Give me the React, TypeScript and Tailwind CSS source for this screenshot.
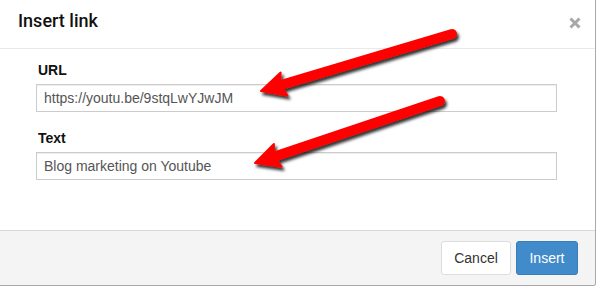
import React from "react";

type P = [number, number];

function Arrow({ tail, tip }: { tail: P; tip: P }) {
  const dx = tip[0] - tail[0];
  const dy = tip[1] - tail[1];
  const len = Math.hypot(dx, dy);
  const ux = dx / len;
  const uy = dy / len;
  const nx = -uy;
  const ny = ux;
  const L = 24;
  const W = 12;
  const back = 4;
  const bx = tip[0] - ux * L;
  const by = tip[1] - uy * L;
  const nb: P = [tip[0] - ux * (L - back), tip[1] - uy * (L - back)];
  const pts = [
    tip,
    [bx + nx * W, by + ny * W],
    nb,
    [bx - nx * W, by - ny * W],
  ]
    .map((p) => `${p[0].toFixed(1)},${p[1].toFixed(1)}`)
    .join(" ");
  return (
    <g filter="url(#sh)">
      <line
        x1={tail[0]}
        y1={tail[1]}
        x2={nb[0]}
        y2={nb[1]}
        stroke="#ff0000"
        strokeWidth={10}
        strokeLinecap="round"
      />
      <polygon points={pts} fill="#ff0000" stroke="#ff0000" strokeWidth={2} strokeLinejoin="round" />
    </g>
  );
}

export default function App() {
  return (
    <div
      className="relative w-[597px] h-[286px] bg-white overflow-hidden"
      style={{ fontFamily: "'Liberation Sans', Arial, sans-serif" }}
    >
      <div className="w-[596px] h-[286px] bg-white border-r border-b border-[#a9a9a9] rounded-br-[3px] flex flex-col">
        {/* header */}
        <div className="h-[49px] border-b border-[#e9e9e9] flex items-start justify-between pl-[18px] pr-[14px]">
          <div
            className="mt-[11px] text-[18px] leading-[20px] font-bold text-[#111]"
            style={{ fontFamily: "Roboto, 'Liberation Sans', sans-serif", fontWeight: 500 }}
          >
            Insert link
          </div>
          <svg width="12" height="12" viewBox="0 0 12 12" className="mt-[17px]">
            <path d="M1.5 1.5 L10.5 10.5 M10.5 1.5 L1.5 10.5" stroke="#a8a8a8" strokeWidth="3" />
          </svg>
        </div>
        {/* body */}
        <div className="flex-1 pl-[36px] pr-[38px] pt-[11px]">
          <div className="flex flex-col">
            <label className="pl-[2px] text-[14px] leading-[20px] font-bold text-[#111]">URL</label>
            <div className="mt-[4px] h-[28px] border border-[#cccccc] shadow-[inset_0_1px_1px_rgba(0,0,0,0.075)] flex items-center px-[7px] text-[14px] text-[#555]">
              https://youtu.be/9stqLwYJwJM
            </div>
            <label className="mt-[16px] pl-[2px] text-[14px] leading-[20px] font-bold text-[#111]">Text</label>
            <div className="mt-[4px] h-[28px] border border-[#cccccc] shadow-[inset_0_1px_1px_rgba(0,0,0,0.075)] flex items-center px-[7px] text-[14px] text-[#555]">
              Blog marketing on Youtube
            </div>
          </div>
        </div>
        {/* footer */}
        <div className="h-[55px] border-t border-[#d8d8d8] bg-[#f4f4f4] flex items-start justify-end gap-[5px] pr-[17px] pt-[10px] rounded-br-[3px]">
          <button className="h-[34px] w-[70px] bg-white border border-[#dddddd] rounded-[3px] text-[14px] text-[#333]">
            Cancel
          </button>
          <button className="h-[34px] w-[62px] bg-[#428bca] border border-[#357ebd] rounded-[3px] text-[14px] text-white">
            Insert
          </button>
        </div>
      </div>
      <svg className="absolute inset-0 pointer-events-none" width="597" height="286">
        <defs>
          <filter id="sh" x="-20%" y="-50%" width="140%" height="200%">
            <feDropShadow dx="2" dy="3" stdDeviation="1.6" floodColor="#000" floodOpacity="0.8" />
          </filter>
        </defs>
        <Arrow tail={[452, 34]} tip={[261, 91]} />
        <Arrow tail={[440, 101]} tip={[255, 163]} />
      </svg>
    </div>
  );
}
